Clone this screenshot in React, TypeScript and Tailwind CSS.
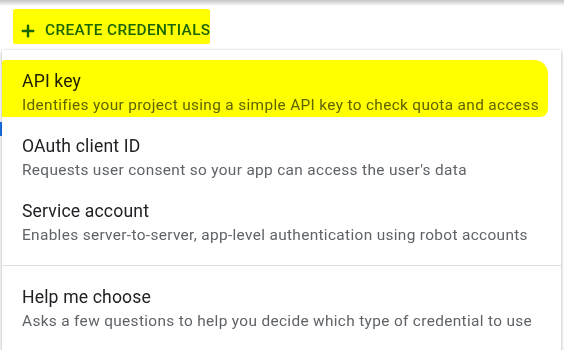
import { Plus } from "lucide-react";

const OPTIONS = [
  {
    title: "API key",
    description: "Identifies your project using a simple API key to check quota and access",
  },
  {
    title: "OAuth client ID",
    description: "Requests user consent so your app can access the user's data",
  },
  {
    title: "Service account",
    description: "Enables server-to-server, app-level authentication using robot accounts",
  },
];

function MenuItem({ title, description }: { title: string; description: string }) {
  return (
    <div className="px-5 pt-2 pb-[9px]">
      <p className="text-[17.6px] leading-6 text-[#202124] tracking-[0.15px]">{title}</p>
      <p className="text-[15.4px] leading-6 text-[#5f6368] tracking-[0.34px]">{description}</p>
    </div>
  );
}

export default function App() {
  return (
    <div
      className="relative w-[564px] h-[350px] overflow-hidden bg-white"
      style={{ fontFamily: "Roboto, 'Noto Sans', sans-serif" }}
    >
      <div className="h-[6px] bg-gradient-to-b from-[#c4c4c4] to-white" />

      {/* page content peeking out behind the menu */}
      <div className="absolute left-0 top-[122px] w-[2px] h-[14px] bg-[#1a73e8]" />

      <div className="flex items-center gap-[8px] pl-[19px] pt-[13px]">
        <Plus className="w-[18px] h-[18px] text-[#1a66d6]" strokeWidth={3.2} />
        <span className="text-[15.4px] font-medium uppercase tracking-[0.35px] text-[#1a66d6]">
          Create credentials
        </span>
      </div>

      <div className="absolute left-[2px] top-[50px] w-[559px] h-[320px] bg-white pt-[11px] shadow-[0_2px_4px_rgba(0,0,0,0.25),0_0_2px_rgba(0,0,0,0.15)]">
        {OPTIONS.map((opt) => (
          <MenuItem key={opt.title} title={opt.title} description={opt.description} />
        ))}
        <div className="mt-[9px] mb-[11px] h-px bg-[#e0e0e0]" />
        <MenuItem
          title="Help me choose"
          description="Asks a few questions to help you decide which type of credential to use"
        />
      </div>

      {/* highlighter marks */}
      <div className="pointer-events-none absolute left-[13px] top-[9px] w-[197px] h-[35px] bg-[#ffff00] mix-blend-multiply rounded-[2px]" />
      <div className="pointer-events-none absolute left-[2px] top-[60px] w-[546px] h-[57px] bg-[#ffff00] mix-blend-multiply rounded-tr-[14px] rounded-br-[8px] rounded-tl-[3px]" />
    </div>
  );
}
